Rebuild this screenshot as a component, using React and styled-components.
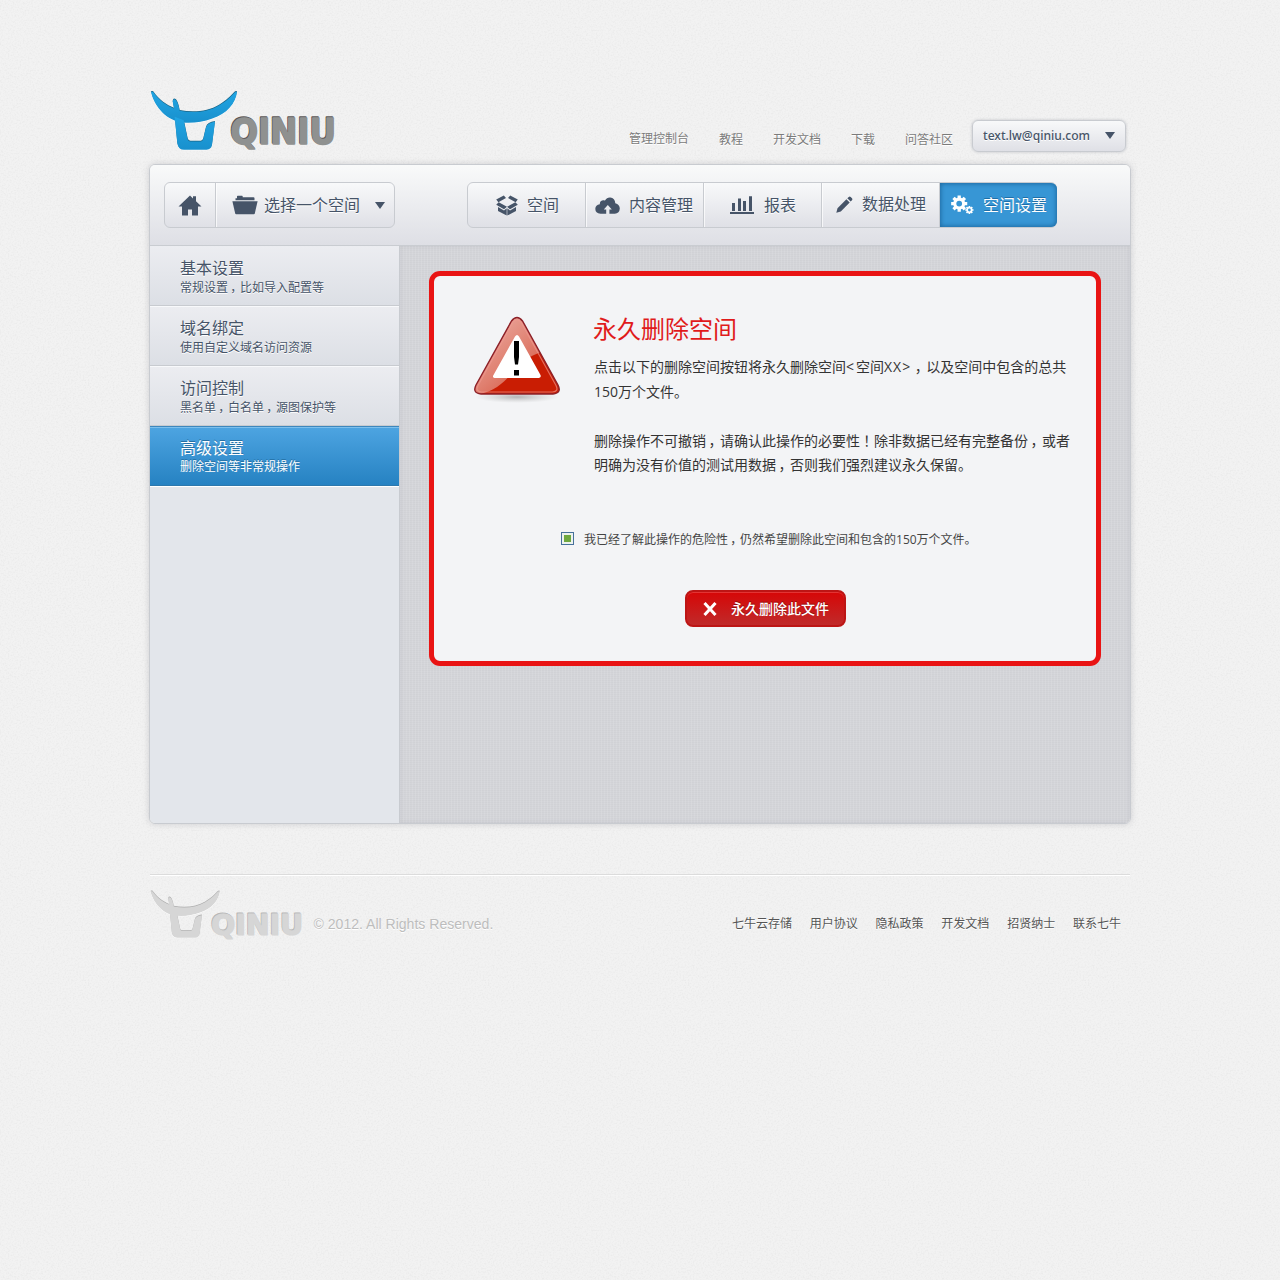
import React from "react";
import styled, { createGlobalStyle, css } from "styled-components";

const grain = `url("data:image/svg+xml,%3Csvg xmlns='http://www.w3.org/2000/svg' width='200' height='200'%3E%3Cfilter id='n' x='0' y='0' width='100%25' height='100%25'%3E%3CfeTurbulence type='fractalNoise' baseFrequency='.6' numOctaves='3' stitchTiles='stitch'/%3E%3CfeColorMatrix values='0 0 0 0 .5 0 0 0 0 .5 0 0 0 0 .5 .32 0 0 0 -.135'/%3E%3C/filter%3E%3Crect width='200' height='200' filter='url(%23n)'/%3E%3C/svg%3E")`;

const GlobalStyle = createGlobalStyle`
  *, *::before, *::after { box-sizing: border-box; }
  html { background: #f2f2f2 ${grain}; }
  body {
    margin: 0;
    font-family: "Open Sans", "Noto Sans CJK SC", sans-serif;
    font-size: 12px;
    line-height: 16px;
    color: #465468;
  }
  svg { display: block; flex: none; }
  p, h1 { margin: 0; }
`;

const Page = styled.div`
  width: 982px;
  height: 1280px;
  margin-left: 149px;
`;

const Header = styled.header`
  display: flex;
  justify-content: space-between;
  height: 164px;
  padding: 89px 5px 0 1px;
`;

const HeaderSide = styled.div`
  display: flex;
  gap: 19px;
  padding-top: 31px;
`;

const TopLinks = styled.nav`
  display: flex;
  gap: 30px;
  padding-top: 11px;
`;

const TopLink = styled.a`
  color: #7b7b7b;
  text-shadow: 0 1px 0 #fff;
  white-space: nowrap;
  padding-top: ${(p) => (p.$raised ? 0 : 1)}px;
`;

const raised = css`
  border: 1px solid #c8cbd0;
  border-radius: 6px;
  background: linear-gradient(#f8f9fa, #dfe0e6);
`;

const Account = styled.button`
  ${raised}
  display: flex;
  align-items: center;
  justify-content: space-between;
  width: 154px;
  height: 32px;
  padding: 0 10px 1px 10px;
  box-shadow: 0 0 3px rgba(120, 125, 140, 0.4);
  font: 500 12.1px/16px "Noto Sans", sans-serif;
  color: #465468;
  text-shadow: 0 1px 0 #fff;
`;

const Caret = styled.span`
  border: 5px solid transparent;
  border-top: 7px solid #465468;
  border-bottom: 0;
`;

const Shell = styled.div`
  height: 660px;
  border: 1px solid #c8cbd0;
  border-radius: 6px;
  overflow: hidden;
  box-shadow: 0 0 6px rgba(100, 100, 110, 0.25);
`;

const Toolbar = styled.div`
  display: flex;
  justify-content: space-between;
  height: 81px;
  padding: 17px 73px 17px 14px;
  border-bottom: 1px solid #c9ccd1;
  background: linear-gradient(#f9fafa, #dedfe5);
`;

const Group = styled.div`
  ${raised}
  display: flex;
  height: 46px;
`;

const ToolItem = styled.a`
  display: flex;
  align-items: center;
  width: ${(p) => p.$width}px;
  height: 44px;
  padding: 0 0 0 ${(p) => p.$inset}px;
  font-size: 16px;
  line-height: 22px;
  white-space: nowrap;
  text-shadow: 0 1px 0 #fff;
  box-shadow: inset 1px 0 0 rgba(255, 255, 255, 0.7);
  & + & { border-left: 1px solid #c8cbd0; }
  &:first-child { box-shadow: none; }
  ${(p) =>
    p.$active &&
    css`
      margin-right: -1px;
      color: #fff;
      text-shadow: 0 -1px 0 #1f6fa8;
      background: #3796d5;
      background-clip: padding-box;
      border-radius: 0 6px 6px 0;
      box-shadow: inset 0 0 4px 1px #1f6ba3;
    `}
`;

const ItemLabel = styled.span`
  margin-left: ${(p) => p.$gap}px;
  padding-bottom: ${(p) => p.$lift || 0}px;
`;

const SelectCaret = styled(Caret)`
  margin-left: 15px;
`;

const Body = styled.div`
  display: flex;
  height: 577px;
`;

const Sidebar = styled.aside`
  width: 250px;
  border-right: 1px solid #c8cbd0;
  background: #e3e6eb;
`;

const SideItem = styled.a`
  display: block;
  height: 60px;
  padding: 11px 0 0 30px;
  border-bottom: 1px solid #c8cbd0;
  background: linear-gradient(#ecedf1, #dcdfe5);
  text-shadow: 0 1px 0 #fff;
  & + & { box-shadow: inset 0 1px 0 #f8f9fb; }
  ${(p) =>
    p.$active &&
    css`
      color: #fff;
      background: linear-gradient(#4ea5e2, #2682c2);
      border-bottom: 1px solid #2d78ad;
      text-shadow: 0 -1px 0 #2470a5;
      && { box-shadow: inset 0 1px 0 #3e87bd, inset 0 2px 0 #7cbfec, 0 1px 0 #fff; }
    `}
`;

const SideTitle = styled.div`
  font-size: 16px;
  line-height: 22px;
`;

const SideNote = styled.div`
  padding-top: ${(p) => (p.$active ? 0 : 1)}px;
  font-size: 12px;
  line-height: 16px;
`;

const Content = styled.main`
  flex: 1;
  padding: 25px 29px 0;
  background:
    repeating-linear-gradient(90deg, rgba(255, 255, 255, 0.1) 0 1px, transparent 1px 3px),
    repeating-linear-gradient(0deg, rgba(140, 144, 154, 0.05) 0 1px, transparent 1px 2px),
    #d4d5d9;
  box-shadow: inset 0 0 4px rgba(120, 124, 134, 0.15);
`;

const Warning = styled.section`
  width: 672px;
  height: 395px;
  padding: 38px 0 0 38px;
  border: 5px solid #e91414;
  border-radius: 11px;
  background: #f3f4f6;
`;

const Notice = styled.div`
  display: flex;
  gap: 32px;
  height: 206px;
`;

const Title = styled.h1`
  margin: 0 0 11px -1px;
  font-size: 24px;
  font-weight: 400;
  line-height: 30px;
  color: #e01b1b;
`;

const Line = styled.p`
  min-height: 24.5px;
  font-size: 14px;
  line-height: 24.5px;
  color: #333;
  white-space: nowrap;
`;

const Wide = styled.span`
  letter-spacing: ${(p) => p.$by}px;
`;

const Mark = styled.span`
  padding: 0 ${(p) => 0.5 - p.$shift}em 0 ${(p) => p.$shift}em;
  font-feature-settings: "halt";
`;

const Confirm = styled.label`
  display: flex;
  align-items: center;
  gap: 10px;
  height: 38px;
  padding-left: 89px;
  color: #444;
  white-space: nowrap;
`;

const ConfirmText = styled.span`
  padding-top: 1px;
`;

const Check = styled.span`
  width: 13px;
  height: 13px;
  margin-bottom: 1px;
  border: 1px solid #46719b;
  background: #6fa83f;
  box-shadow: inset 0 0 0 2px #edf2ee;
`;

const DeleteButton = styled.button`
  display: flex;
  align-items: center;
  gap: 14px;
  width: 161px;
  height: 37px;
  margin: 32px 0 0 213px;
  padding: 0 0 0 16px;
  border: 2px solid #bd1515;
  border-radius: 8px;
  background: linear-gradient(#d60707, #c02a2a);
  box-shadow: inset 0 1px 0 #e33434;
  color: #fff;
  font: 500 14px/20px "Open Sans", "Noto Sans CJK SC", sans-serif;
  text-shadow: 0 -1px 0 #8e0d0d;
  white-space: nowrap;
`;

const Footer = styled.footer`
  display: flex;
  justify-content: space-between;
  height: 72px;
  margin: 50px 1px 0;
  padding: 14px 9px 0 0;
  border-top: 1px solid #dcdcdc;
  box-shadow: inset 0 1px 0 #fff;
`;

const Brand = styled.div`
  display: flex;
  gap: 8.5px;
`;

const Copyright = styled.span`
  padding-top: 27px;
  font: 14.05px/16px "Liberation Sans", sans-serif;
  color: #bdbdbd;
  text-shadow: 0 1px 0 #fff;
`;

const FooterLinks = styled.nav`
  display: flex;
  gap: 17.8px;
  padding-top: 27px;
  color: #555;
  text-shadow: 0 1px 0 #fff;
  white-space: nowrap;
`;

const WordMark = styled.text`
  font-family: "DejaVu Sans", sans-serif;
  font-weight: 700;
  stroke-linejoin: round;
`;

const HORNS =
  "M33 33L39 33C58 60 80 75 102 83L98 62Q100 51 108 58Q115 66 119 90C160 98 205 94 237 74C260 60 271 49 285 34L291 33C287 68 260 100 217 113C187 124 160 127 128 125C84 121 44 82 33 33Z";
const FACE =
  "M104 108L112 188Q115 207 132 207L200 207Q214 206 216 192L225 123Q202 126 198 140L190 174Q188 182 182 182L151 182Q145 182 143 175L131 118Z";

function Logo({ width, height, id, scale, colors, text }) {
  const word = { y: text.y, fontSize: text.size, textLength: text.length, lengthAdjust: "spacingAndGlyphs", strokeWidth: text.stroke };
  return (
    <svg width={width} height={height} viewBox={`0 0 ${width} ${height}`}>
      <defs>
        <linearGradient id={id} x1="0" y1="0" x2="0" y2="1">
          <stop offset="0" stopColor={colors.top} />
          <stop offset="1" stopColor={colors.bottom} />
        </linearGradient>
      </defs>
      <g transform={`scale(${scale / 3}) translate(-30 -27)`}>
        <g fill="#fff" transform="translate(0 4)"><path d={HORNS} /><path d={FACE} /></g>
        <g fill={colors.edge}><path d={HORNS} /><path d={FACE} /></g>
        <g fill={`url(#${id})`} transform="translate(0 2.4)"><path d={HORNS} /><path d={FACE} /></g>
      </g>
      <WordMark {...word} x={text.x - 0.5} dy="-0.8" fill={colors.wordEdge} stroke={colors.wordEdge} aria-hidden="true">QINIU</WordMark>
      <WordMark {...word} x={text.x + 0.3} fill={colors.word} stroke={colors.word}>QINIU</WordMark>
    </svg>
  );
}

function Icon({ w, h, children }) {
  return <svg width={w} height={h} viewBox={`0 0 ${w} ${h}`} fill="currentColor">{children}</svg>;
}

const HomeIcon = () => (
  <Icon w={24} h={21}>
    <path d="M12 .5 15 3.4V1.2h3v5L23.5 11.5H20V20.5H14V14.5H10V20.5H4V11.5H.5Z" />
  </Icon>
);

const FolderIcon = () => (
  <Icon w={26} h={20}>
    <path d="M3.5 5.3V3.2H5V1.4Q5 .7 5.7.7H10Q10.7.7 10.7 1.4V2.2H21.5Q22.5 2.2 22.5 3.2V5.3Z" />
    <path d="M.4 6.2H25.6L22.8 18.6Q22.6 19.3 21.8 19.3H4.2Q3.4 19.3 3.2 18.6Z" />
  </Icon>
);

const BoxIcon = () => (
  <Icon w={22} h={21}>
    <path d="M.2 4.6 7.8.5 10 3 2.4 7.2ZM21.8 4.6 14.2.5 12 3 19.6 7.2ZM.2 9.7 2.7 7.3 11 11.8 8 14.3ZM21.8 9.7 19.3 7.3 11 11.8 14 14.3Z" />
    <path d="M2 12.1 8 15.6 10.7 13.2V20.6L2 16ZM20 12.1 14 15.6 11.3 13.2V20.6L20 16Z" />
  </Icon>
);

const CloudIcon = () => (
  <Icon w={25} h={17}>
    <path d="M5.5 16.8Q.3 16.3.3 11.8.5 8 4.8 7.3 4.6 3.8 8 3.2 9 3 10 3.5 11.8.2 15.2.4 20 .8 20.3 6.2 24.7 7.3 24.8 11.6 24.5 16.4 19.8 16.8H14.4V12.5H16.8L12.8 8 8.8 12.5H11.2V16.8Z" />
  </Icon>
);

const ChartIcon = () => (
  <Icon w={24} h={18}>
    <path d="M2 7H5V15H2ZM8 2.5H11V15H8ZM13 5H16V15H13ZM19 .3H22V15H19ZM0 16H24V18H0Z" />
  </Icon>
);

const PencilIcon = () => (
  <Icon w={17} h={19}>
    <path d="M.3 16.7 1.5 12.2 10.4 3.2 13.7 6.5 4.8 15.5ZM11.3 2.3 12.8.9Q13.7.1 14.7 1L16 2.3Q16.9 3.2 16 4.2L14.6 5.6Z" />
  </Icon>
);

function gearPath(cx, cy, outer, inner, hole) {
  const pts = [];
  for (let i = 0; i < 8; i += 1) {
    const a = (i * Math.PI) / 4;
    [[-0.28, inner], [-0.2, outer], [0.2, outer], [0.28, inner]].forEach(([d, r]) => {
      pts.push(`${(cx + r * Math.cos(a + d)).toFixed(2)} ${(cy + r * Math.sin(a + d)).toFixed(2)}`);
    });
  }
  return `M${pts.join("L")}ZM${cx - hole} ${cy}a${hole} ${hole} 0 1 0 ${hole * 2} 0a${hole} ${hole} 0 1 0 ${-hole * 2} 0Z`;
}

const GearsIcon = () => (
  <Icon w={23} h={20}>
    <path fillRule="evenodd" d={gearPath(8.2, 8.6, 8.2, 6, 2.9)} />
    <path fillRule="evenodd" d={gearPath(18.4, 15, 4.2, 3.1, 1.4)} />
  </Icon>
);

const CrossIcon = () => (
  <Icon w={14} h={14}>
    <path d="M1.5 1 12.5 13M12.5 1 1.5 13" stroke="currentColor" strokeWidth="3" />
  </Icon>
);

const WarningIcon = () => (
  <svg width="90" height="90" viewBox="0 0 90 90">
    <defs>
      <linearGradient id="gloss" x1="0" y1="0" x2="1" y2="1">
        <stop offset="0" stopColor="#eeb8b0" />
        <stop offset=".5" stopColor="#e08070" />
        <stop offset="1" stopColor="#cc3a22" />
      </linearGradient>
      <radialGradient id="ground">
        <stop offset="0" stopColor="#999" stopOpacity=".7" />
        <stop offset="1" stopColor="#bbb" stopOpacity="0" />
      </radialGradient>
      <clipPath id="tri"><path d="M39.5 7Q45 0 50.5 7L86 71Q90 79 81 80H9Q0 79 4 71Z" /></clipPath>
    </defs>
    <ellipse cx="45" cy="83" rx="42" ry="6" fill="url(#ground)" />
    <g clipPath="url(#tri)">
      <rect width="90" height="90" fill="#c91d03" />
      <path d="M0 0H90V37C72 34 55 42 43 55C35 66 24 77 8 80H0Z" fill="url(#gloss)" />
    </g>
    <path d="M39.5 7Q45 0 50.5 7L86 71Q90 79 81 80H9Q0 79 4 71Z" fill="none" stroke="#8c2028" strokeWidth="1.4" />
    <path d="M40.8 8.5Q45 3 49.2 8.5L84 71.5Q87 77.5 80.5 78H9.5Q3 77.5 6 71.5Z" fill="none" stroke="#ef9a90" strokeOpacity=".65" strokeWidth="1.2" />
    <path d="M43 22.5Q45 19.5 47 22.5L68.5 61Q69.5 63.5 67 64H22.5Q20 63.5 21.5 61Z" fill="#fff" />
    <path d="M42 27H47V43L46 50.5H43L42 43ZM42 56H47V61.5H42Z" fill="#000" />
  </svg>
);

const MARK_SHIFT = { "，": 0.18, "！": 0.24 };

function Han({ children }) {
  return children.split(/([，！])/).map((part, i) =>
    MARK_SHIFT[part] ? <Mark key={i} $shift={MARK_SHIFT[part]}>{part}</Mark> : part
  );
}

const TOP_LINKS = ["管理控制台", "教程", "开发文档", "下载", "问答社区"];
const TABS = [
  { label: "空间", icon: <BoxIcon />, width: 117, inset: 28, gap: 9 },
  { label: "内容管理", icon: <CloudIcon />, width: 118, inset: 9, gap: 9 },
  { label: "报表", icon: <ChartIcon />, width: 118, inset: 26, gap: 10 },
  { label: "数据处理", icon: <PencilIcon />, width: 118, inset: 14, gap: 9, lift: 2 },
  { label: "空间设置", icon: <GearsIcon />, width: 118, inset: 11, gap: 9, active: true },
];
const SIDE_ITEMS = [
  ["基本设置", "常规设置，比如导入配置等"],
  ["域名绑定", "使用自定义域名访问资源"],
  ["访问控制", "黑名单，白名单，源图保护等"],
  ["高级设置", "删除空间等非常规操作"],
];
const FOOTER_LINKS = ["七牛云存储", "用户协议", "隐私政策", "开发文档", "招贤纳士", "联系七牛"];

export default function App() {
  return (
    <Page lang="zh-CN">
      <GlobalStyle />
      <Header>
        <Logo
          id="logo-blue"
          width={192}
          height={72}
          scale={1}
          colors={{ top: "#21a5e3", bottom: "#1990cd", edge: "#176487", word: "#8f9190", wordEdge: "#5c5858" }}
          text={{ x: 80.3, y: 55, size: 35.5, length: 105.5, stroke: 1.5 }}
        />
        <HeaderSide>
          <TopLinks>
            {TOP_LINKS.map((label, i) => <TopLink key={label} $raised={i === 0}>{label}</TopLink>)}
          </TopLinks>
          <Account>text.lw@qiniu.com<Caret /></Account>
        </HeaderSide>
      </Header>
      <Shell>
        <Toolbar>
          <Group>
            <ToolItem $width={50} $inset={13}><HomeIcon /></ToolItem>
            <ToolItem $width={179} $inset={16}>
              <FolderIcon />
              <ItemLabel $gap={6}>选择一个空间</ItemLabel>
              <SelectCaret />
            </ToolItem>
          </Group>
          <Group>
            {TABS.map((t) => (
              <ToolItem key={t.label} $width={t.width} $inset={t.inset} $active={t.active}>
                {t.icon}
                <ItemLabel $gap={t.gap} $lift={t.lift}>{t.label}</ItemLabel>
              </ToolItem>
            ))}
          </Group>
        </Toolbar>
        <Body>
          <Sidebar>
            {SIDE_ITEMS.map(([title, note], i) => (
              <SideItem key={title} $active={i === 3}>
                <SideTitle>{title}</SideTitle>
                <SideNote $active={i === 3}><Han>{note}</Han></SideNote>
              </SideItem>
            ))}
          </Sidebar>
          <Content>
            <Warning>
              <Notice>
                <WarningIcon />
                <div>
                  <Title>永久删除空间</Title>
                  <Line>点击以下的删除空间按钮将永久删除空间<Wide $by={2}>&lt;</Wide>空间<Wide $by={1}>XX</Wide><Wide $by={2}>&gt;</Wide><Han>，以及空间中包含的总共</Han></Line>
                  <Line>150万个文件。</Line>
                  <Line />
                  <Line><Han>删除操作不可撤销，请确认此操作的必要性！除非数据已经有完整备份，或者</Han></Line>
                  <Line><Han>明确为没有价值的测试用数据，否则我们强烈建议永久保留。</Han></Line>
                </div>
              </Notice>
              <Confirm>
                <Check />
                <ConfirmText><Han>我已经了解此操作的危险性，仍然希望删除此空间和包含的150万个文件。</Han></ConfirmText>
              </Confirm>
              <DeleteButton><CrossIcon />永久删除此文件</DeleteButton>
            </Warning>
          </Content>
        </Body>
      </Shell>
      <Footer>
        <Brand>
          <Logo
            id="logo-grey"
            width={155}
            height={56}
            scale={0.8}
            colors={{ top: "#d6d6d6", bottom: "#d6d6d6", edge: "#adadad", word: "#d6d6d6", wordEdge: "#b8b8b8" }}
            text={{ x: 61, y: 45.5, size: 29, length: 92, stroke: 1.2 }}
          />
          <Copyright>© 2012. All Rights Reserved.</Copyright>
        </Brand>
        <FooterLinks>
          {FOOTER_LINKS.map((label) => <a key={label}>{label}</a>)}
        </FooterLinks>
      </Footer>
    </Page>
  );
}
